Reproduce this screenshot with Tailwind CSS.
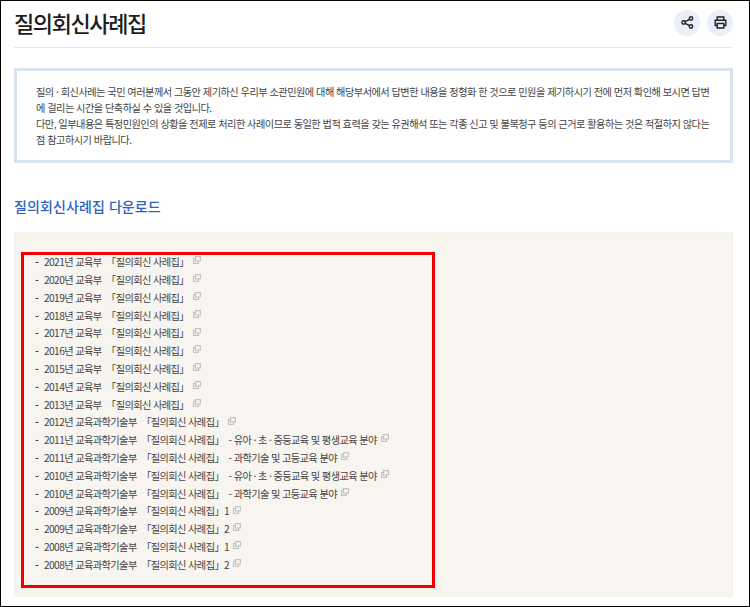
<!DOCTYPE html>
<html lang="ko">
<head>
    <meta charset="UTF-8">
    <meta name="viewport" content="width=device-width, initial-scale=1.0">
    <title>질의회신사례집</title>
    <script src="https://cdn.jsdelivr.net/npm/@tailwindcss/browser@4"></script>
</head>
<body class="bg-white">
    <div class="w-[750px] h-[607px] border border-black overflow-hidden font-['Noto_Sans_CJK_KR',sans-serif] text-[#333]">
        <div class="mx-[13px] w-[719px]">
            <div class="flex items-center justify-between h-[47px] border-b border-[#e8e8e8]">
                <h1 class="text-[22px] font-medium tracking-[-1.4px] leading-[44px] text-[#1d1d1d] mb-[5px]">질의회신사례집</h1>
                <div class="flex gap-[7px] mb-[3px]">
                    <button class="w-[26px] h-[26px] rounded-full bg-[#e9f0fa] flex items-center justify-center">
                        <svg width="13" height="13" viewBox="0 0 13 13" fill="none" stroke="#222" stroke-width="1.4"><circle cx="10" cy="2.5" r="1.7"/><circle cx="2.7" cy="6.5" r="1.7"/><circle cx="10" cy="10.5" r="1.7"/><path d="M4.2 5.7l4.3-2.4M4.2 7.3l4.3 2.4"/></svg>
                    </button>
                    <button class="w-[26px] h-[26px] rounded-full bg-[#e9f0fa] flex items-center justify-center">
                        <svg width="13" height="13" viewBox="0 0 13 13" fill="none" stroke="#222" stroke-width="1.4"><path d="M3.2 4V1h6.6v3M3 9.5H1.2V4.2h10.6v5.3H10"/><path d="M3.2 7.5h6.6V12H3.2z"/></svg>
                    </button>
                </div>
            </div>

            <div class="mt-[20px] h-[95px] border-[3px] border-[#d9e4f3] pl-[19px] pr-[10px] pt-[13px] text-[10.2px] leading-[16px] text-[#444] tracking-[-0.52px]">
                <p class="whitespace-nowrap">질의 · 회신사례는 국민 여러분께서 그동안 제기하신 우리부 소관민원에 대해 해당부서에서 답변한 내용을 정형화 한 것으로 민원을 제기하시기 전에 먼저 확인해 보시면 답변</p>
                <p>에 걸리는 시간을 단축하실 수 있을 것입니다.</p>
                <p class="whitespace-nowrap">다만, 일부내용은 특정민원인의 상황을 전제로 처리한 사례이므로 동일한 법적 효력을 갖는 유권해석 또는 각종 신고 및 불복청구 등의 근거로 활용하는 것은 적절하지 않다는</p>
                <p>점 참고하시기 바랍니다.</p>
            </div>

            <h2 class="mt-[32px] text-[14px] leading-[22px] font-medium tracking-[0.1px] text-[#2f5fbd]">질의회신사례집 다운로드</h2>

            <div class="relative mt-[15px] h-[365px] bg-[#f8f4f0] border border-[#f5f0ea] pl-[20px] pt-[20px]">
                <ul id="list" class="text-[10.2px] text-[#444] tracking-[-0.6px]"></ul>
                <!-- red annotation drawn over the list -->
                <div class="absolute left-[6px] top-[19px] w-[414px] h-[336px] border-[3px] border-[#f00000]"></div>
            </div>
        </div>
    </div>

    <script>
        const rows = [
            '2021년 교육부 \u00a0「질의회신 사례집」',
            '2020년 교육부 \u00a0「질의회신 사례집」',
            '2019년 교육부 \u00a0「질의회신 사례집」',
            '2018년 교육부 \u00a0「질의회신 사례집」',
            '2017년 교육부 \u00a0「질의회신 사례집」',
            '2016년 교육부 \u00a0「질의회신 사례집」',
            '2015년 교육부 \u00a0「질의회신 사례집」',
            '2014년 교육부 \u00a0「질의회신 사례집」',
            '2013년 교육부 \u00a0「질의회신 사례집」',
            '2012년 교육과학기술부 \u00a0「질의회신 사례집」',
            '2011년 교육과학기술부 \u00a0「질의회신 사례집」 \u00a0- 유아 · 초 · 중등교육 및 평생교육 분야',
            '2011년 교육과학기술부 \u00a0「질의회신 사례집」 \u00a0- 과학기술 및 고등교육 분야',
            '2010년 교육과학기술부 \u00a0「질의회신 사례집」 \u00a0- 유아 · 초 · 중등교육 및 평생교육 분야',
            '2010년 교육과학기술부 \u00a0「질의회신 사례집」 \u00a0- 과학기술 및 고등교육 분야',
            '2009년 교육과학기술부 \u00a0「질의회신 사례집」1',
            '2009년 교육과학기술부 \u00a0「질의회신 사례집」2',
            '2008년 교육과학기술부 \u00a0「질의회신 사례집」1',
            '2008년 교육과학기술부 \u00a0「질의회신 사례집」2'
        ];
        const list = document.getElementById('list');
        rows.forEach(function(text) {
            const li = document.createElement('li');
            li.className = 'flex items-center whitespace-pre h-[17.8px]';
            li.innerHTML = '<span class="w-[9px] font-bold">-</span><span>' + text + '</span>' +
                '<svg class="ml-[4px] mb-[3px]" width="8" height="8" viewBox="0 0 8 8" fill="none" stroke="#c4c4c4" stroke-width="1.2"><path d="M2.5 .6h4.9v4.4H2.5zM2.5 2.5H.6v4.9h4.9V5"/></svg>';
            list.appendChild(li);
        });
    </script>
</body>
</html>
